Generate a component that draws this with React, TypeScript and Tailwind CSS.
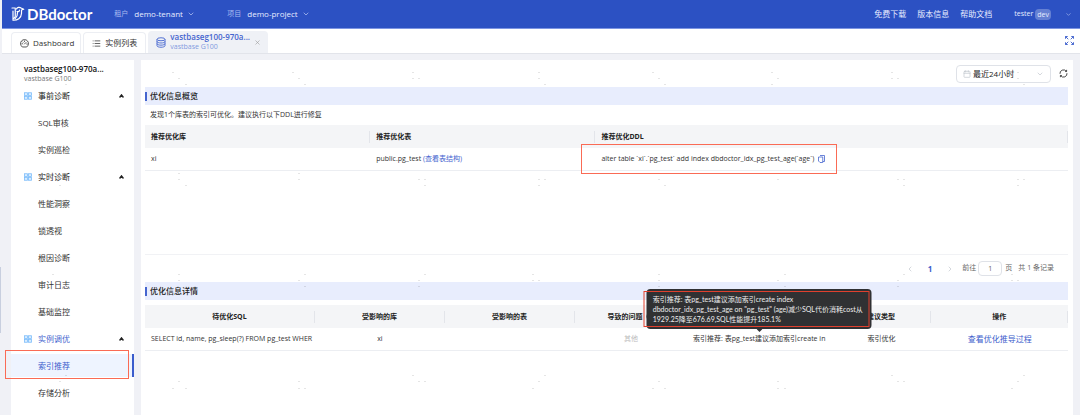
import React from "react";
import { Calendar, ChevronDown, ChevronLeft, ChevronRight, CircleHelp, List, X } from "lucide-react";

type MenuGroup = { title: string; active?: boolean; items: string[] };

const MENU: MenuGroup[] = [
  { title: "事前诊断", items: ["SQL审核", "实例巡检"] },
  { title: "实时诊断", items: ["性能洞察", "锁透视", "根因诊断", "审计日志", "基础监控"] },
  { title: "实例调优", active: true, items: ["索引推荐", "存储分析"] },
];

const CURRENT = "索引推荐";

// faint watermark specks, [x, y]
const SPECKS: [number, number][] = [
  [172, 72], [178, 78], [185, 84], [292, 72], [298, 78], [304, 84],
  [412, 72], [412, 78], [418, 78], [538, 72], [538, 78], [544, 84],
  [652, 72], [658, 78], [664, 84], [771, 72], [777, 78], [771, 84],
  [891, 72], [891, 78], [897, 78], [1017, 72], [1017, 78], [1023, 84], [65, 84],
  [178, 173], [178, 179], [185, 185], [298, 173], [298, 179], [59, 185],
  [418, 179], [424, 179], [424, 185], [538, 179], [544, 179], [538, 185],
  [658, 179], [664, 185], [777, 179], [897, 179], [903, 179], [903, 185],
  [1017, 179], [1023, 179], [1017, 185],
  [52, 274], [178, 274], [178, 280], [298, 280], [304, 274], [304, 286],
  [418, 280], [424, 274], [418, 286], [532, 274], [532, 280], [538, 280],
  [658, 274], [658, 280], [658, 286], [777, 280], [784, 274], [784, 286],
  [897, 280], [903, 274], [897, 286], [1011, 280], [1017, 280], [1011, 274],
  [65, 375], [59, 381], [178, 381], [172, 388], [185, 388], [298, 381], [298, 388], [304, 388],
  [412, 375], [418, 381], [424, 381], [544, 375], [538, 381], [532, 388],
  [658, 381], [652, 388], [664, 388], [777, 381], [777, 388], [784, 388],
  [891, 375], [897, 381], [903, 381], [1023, 375], [1017, 381], [1011, 388],
];

function Logo() {
  return (
    <svg className="shrink-0" width="14" height="16" viewBox="0 0 28 32" fill="none" stroke="#fff" strokeWidth="2.4" strokeLinecap="round" strokeLinejoin="round">
      <path d="M2 4h6.500v17L4 27V10" />
      <path d="M4 28.500c9 .5 16.500-4.500 17-13.500V8l4.500-1.500L20 4c-3-2.500-8-1.500-9 2" />
      <path d="M12 11c3 1 5 0 5-3M13 13c.5 5-1.500 9-5 12.500" />
    </svg>
  );
}

function GaugeIcon() {
  return (
    <svg width="9" height="9" viewBox="0 0 18 18" fill="none" stroke="#444" strokeWidth="1.8" strokeLinecap="round">
      <path d="M4 15.5a8 8 0 1 1 10 0z" strokeLinejoin="round" />
      <path d="m9 10 3-3M9 4v1M4 9.500h1M13.500 10h1M5.500 6l.6.6" />
    </svg>
  );
}

function DatabaseIcon() {
  return (
    <svg className="shrink-0" width="10" height="11" viewBox="0 0 20 22" fill="none" stroke="#4565cf" strokeWidth="1.8">
      <ellipse cx="10" cy="4.500" rx="8" ry="3" />
      <path d="M2 4.500v13c0 1.700 3.600 3 8 3s8-1.300 8-3v-13M2 9c0 1.700 3.600 3 8 3s8-1.300 8-3M2 13.300c0 1.700 3.600 3 8 3s8-1.300 8-3" />
    </svg>
  );
}

function GridIcon() {
  return (
    <svg width="8" height="8" viewBox="0 0 16 16" fill="#d9edff" stroke="#7cbcfa" strokeWidth="1.6">
      <rect x="1" y="1.500" width="6" height="5.500" />
      <rect x="9" y="1.500" width="6" height="5.500" />
      <rect x="1" y="9" width="6" height="5.500" />
      <rect x="9" y="9" width="6" height="5.500" />
    </svg>
  );
}

function ExpandIcon() {
  return (
    <svg width="9" height="9" viewBox="0 0 18 18" fill="none" stroke="#3a5ccc" strokeWidth="1.800">
      <path d="M1 5.500V1h4.500M1 1l5.500 5.500M12.500 1H17v4.500M17 1l-5.500 5.500M1 12.500V17h4.500M1 17l5.500-5.500M17 12.500V17h-4.500M17 17l-5.500-5.500" />
    </svg>
  );
}

function RefreshIcon() {
  return (
    <svg width="9" height="9" viewBox="0 0 16 16" fill="none" stroke="#333" strokeWidth="1.600">
      <path d="M1.800 8.500A6.200 6.200 0 0 1 13 4.200M14.200 7.500A6.200 6.200 0 0 1 3 11.800" />
      <path d="M13.500 1.500v3H11M2.500 14.500v-3H5" />
    </svg>
  );
}

function CopyIcon() {
  return (
    <svg width="7" height="8" viewBox="0 0 14 16" fill="none" stroke="#4565cf" strokeWidth="1.600">
      <path d="M4 1h9v12" />
      <path d="M1 4h8.500v11H4l-3-3z" />
      <path d="M9.500 13H13" />
    </svg>
  );
}

function HeaderSelect({ id, label, value }: { id: string; label: string; value: string }) {
  return (
    <div className="flex items-center">
      <label htmlFor={id} className="mr-1.5 text-[7px] text-[#a9baf0]">{label}</label>
      <select id={id} className="appearance-none bg-transparent text-[8px] text-[#e6ecff] outline-none">
        <option>{value}</option>
      </select>
      <ChevronDown size={8} className="ml-1 text-[#c3d0f7]" />
    </div>
  );
}

function Header() {
  return (
    <header className="flex h-[29px] items-center border-b border-[#7d95e2] bg-[#2c51c3] pr-2 pl-[9px] text-[8px] text-[#e6ecff]">
      <Logo />
      <span className="mr-[22px] ml-0.5 font-['Lato'] text-[15px] leading-4 font-bold text-white">DBdoctor</span>
      <div className="flex gap-8">
        <HeaderSelect id="tenant" label="租户" value="demo-tenant" />
        <HeaderSelect id="project" label="项目" value="demo-project" />
      </div>
      <nav className="ml-auto flex gap-[11px]">
        <a href="#download">免费下载</a>
        <a href="#version">版本信息</a>
        <a href="#docs">帮助文档</a>
      </nav>
      <button className="ml-[22px] flex items-center text-[7px]">
        tester
        <span className="ml-0.5 rounded-sm bg-[#6580d3] px-0.5 leading-[11px]">dev</span>
        <ChevronDown size={7} className="ml-3.5 text-[#b4c3f2]" />
      </button>
    </header>
  );
}

function Tabs() {
  return (
    <div className="flex h-[25px] items-end border-b border-[#e2e4ea] bg-white pr-1.5 pl-[9px] text-[8px] text-[#333]">
      <a href="#dashboard" className="flex h-[21px] items-center gap-1 rounded-t-sm border border-b-0 border-[#eceef3] pr-1.5 pl-2">
        <GaugeIcon />
        Dashboard
      </a>
      <a href="#instances" className="ml-0.5 flex h-[21px] items-center gap-1 rounded-t-sm border border-b-0 border-[#eceef3] px-2">
        <List size={9} />
        实例列表
      </a>
      <div className="ml-0.5 flex h-[22px] w-[120px] items-center rounded-t-sm bg-[#eff1f6] px-2">
        <DatabaseIcon />
        <a href="#instance" className="ml-1 flex w-20 flex-col leading-[10px] text-[#4565cf]">
          <span className="font-semibold whitespace-nowrap">vastbaseg100-970a...</span>
          <span className="text-[7px] text-[#8199e0]">vastbase G100</span>
        </a>
        <button aria-label="close" className="ml-1 text-[#999]">
          <X size={7} />
        </button>
      </div>
      <button aria-label="fullscreen" className="mb-2 ml-auto">
        <ExpandIcon />
      </button>
    </div>
  );
}

function Sidebar() {
  return (
    <aside className="w-[123px] shrink-0 bg-white pt-1 text-[8px] text-[#333]">
      <div className="h-[18px] pl-[13px] leading-[10px]">
        <p className="font-semibold text-[#111]">vastbaseg100-970a...</p>
        <p className="text-[7px] text-[#777]">vastbase G100</p>
      </div>
      {MENU.map((group) => (
        <div key={group.title}>
          <button className={`flex h-[27px] w-full items-center pr-2.5 pl-[13px] ${group.active ? "text-[#4565cf]" : "text-[#222]"}`}>
            <GridIcon />
            <span className="ml-1.5">{group.title}</span>
            <svg className="ml-auto" width="5" height="4" viewBox="0 0 10 8" fill="none" stroke="#222" strokeWidth="3">
              <path d="M1 7 5 2l4 5" />
            </svg>
          </button>
          {group.items.map((item) => (
            <div key={item} className="relative py-0.5">
              {item === CURRENT ? (
                <>
                  <a href="#index" className="flex h-[23px] items-center border-r-2 border-[#3a5ccc] bg-[#eef4ff] pl-[27px] text-[#3a5ccc]">
                    {item}
                  </a>
                  <span className="absolute -top-0.5 right-[5px] -left-1.5 h-[29px] border border-[#fa6b55]" />
                </>
              ) : (
                <a href="#menu" className="flex h-[23px] items-center pl-[27px]">{item}</a>
              )}
            </div>
          ))}
        </div>
      ))}
    </aside>
  );
}

function SectionTitle({ children }: { children: React.ReactNode }) {
  return (
    <h2 className="flex h-[18px] items-center bg-[#e8edfd] text-[8px] font-medium text-[#222]">
      <span className="mr-[3px] h-[9px] w-0.5 bg-[#4565cf]" />
      {children}
    </h2>
  );
}

function Th({ children, className = "text-center" }: { children?: React.ReactNode; className?: string }) {
  return (
    <th className="h-[23px] p-0">
      <div className={`h-3 border-r border-[#e3e5ea] px-1.5 leading-3 font-bold whitespace-nowrap ${className}`}>{children}</div>
    </th>
  );
}

function OverviewTable() {
  return (
    <table className="w-full table-fixed border-collapse text-left text-[7px] text-[#333]">
      <colgroup>
        <col className="w-[24.4%]" />
        <col className="w-[24.4%]" />
        <col />
      </colgroup>
      <thead className="bg-[#f4f5f7] text-[#222]">
        <tr>
          <Th className="text-left">推荐优化库</Th>
          <Th className="text-left">推荐优化表</Th>
          <Th className="text-left">推荐优化DDL</Th>
        </tr>
      </thead>
      <tbody>
        <tr className="h-[22px] border-b border-[#eceef2]">
          <td className="px-1.5">xi</td>
          <td className="px-1.5">
            public.pg_test <a href="#schema" className="text-[#4565cf]">(查看表结构)</a>
          </td>
          <td className="relative px-1.5">
            <div className="flex items-center gap-1 whitespace-nowrap">
              alter table `xi`.`pg_test` add index dbdoctor_idx_pg_test_age(`age`)
              <button aria-label="copy"><CopyIcon /></button>
            </div>
            <span className="absolute -top-1 -left-3.5 h-[30px] w-64 border border-[#fa6b55]" />
          </td>
        </tr>
      </tbody>
    </table>
  );
}

function Pagination() {
  return (
    <div className="flex h-7 items-center justify-end border-t border-[#f1f2f5] pr-3.5 text-[7px] text-[#666]">
      <button aria-label="previous" className="text-[#c0c4cc]"><ChevronLeft size={8} /></button>
      <button className="mx-3.5 text-[8px] font-bold text-[#3a5ccc]">1</button>
      <button aria-label="next" className="mr-2 text-[#c0c4cc]"><ChevronRight size={8} /></button>
      <label htmlFor="page">前往</label>
      <input id="page" defaultValue="1" className="mr-[3px] ml-0.5 h-[15px] w-6 rounded-sm border border-[#dfe2e8] text-center outline-none" />
      <span className="mr-1.5">页</span>
      <span>共 1 条记录</span>
    </div>
  );
}

function Tooltip() {
  return (
    <div role="tooltip" className="absolute bottom-full left-1/2 mb-[5px] w-[225px] -translate-x-1/2 rounded-sm bg-[#303133] px-1.5 py-[5px] text-left font-['Lato','Noto_Sans_CJK_SC',sans-serif] text-[7px] leading-[10px] whitespace-nowrap text-[#eee]">
      索引推荐: 表pg_test建议添加索引create index
      <br />
      dbdoctor_idx_pg_test_age on "pg_test" (age)减少SQL代价消耗cost从
      <br />
      1929.25降至676.69,SQL性能提升185.1%
      <span className="absolute top-0.5 right-0.5 bottom-0.5 -left-[3px] border border-[#e0402e]" />
      <svg className="absolute top-full left-1/2 -translate-x-1/2" width="6" height="3" viewBox="0 0 6 3" fill="#303133">
        <path d="M0 0h6L3 3z" />
      </svg>
    </div>
  );
}

function DetailTable() {
  return (
    <table className="mt-[5px] w-full table-fixed border-collapse text-center text-[7px] text-[#333]">
      <colgroup>
        <col className="w-[18.4%]" />
        <col className="w-[14.1%]" />
        <col className="w-[14.1%]" />
        <col className="w-[12.1%]" />
        <col className="w-[15.7%]" />
        <col className="w-[10.8%]" />
        <col />
      </colgroup>
      <thead className="bg-[#f4f5f7] text-[#222]">
        <tr>
          <Th>待优化SQL</Th>
          <Th>受影响的库</Th>
          <Th>受影响的表</Th>
          <Th className="flex items-center justify-center gap-1">
            导致的问题
            <CircleHelp size={7} />
          </Th>
          <Th />
          <Th>建议类型</Th>
          <Th>操作</Th>
        </tr>
      </thead>
      <tbody>
        <tr className="h-[22px] border-b border-[#eceef2]">
          <td className="overflow-hidden px-1.5 text-left whitespace-nowrap">SELECT id, name, pg_sleep(?) FROM pg_test WHER</td>
          <td>xi</td>
          <td />
          <td className="text-[#bbb]">其他</td>
          <td className="whitespace-nowrap">
            <div className="relative">
              索引推荐: 表pg_test建议添加索引create in
              <Tooltip />
            </div>
          </td>
          <td>索引优化</td>
          <td>
            <a href="#detail" className="text-[8px] text-[#3a5ccc]">查看优化推导过程</a>
          </td>
        </tr>
      </tbody>
    </table>
  );
}

export default function App() {
  return (
    <div className="relative flex min-h-screen bg-[#f0f1f6] pl-0.5 font-['Open_Sans','Noto_Sans_CJK_SC',sans-serif]">
      <span className="absolute top-[267px] left-0 h-[66px] w-px bg-[#c8cfdf]" />
      <div className="flex min-w-0 flex-1 flex-col">
        <Header />
        <Tabs />
        <div className="flex flex-1 gap-[7px] pt-1.5 pr-[7px] pl-[9px]">
          <Sidebar />
          <main className="min-w-0 flex-1 bg-white pr-[5px] pl-1">
            <div className="flex h-[27px] items-center justify-end">
              <div className="flex h-[18px] w-[95px] items-center rounded-sm border border-[#dfe2e8] px-1.5">
                <Calendar size={8} className="mr-0.5 text-[#c0c4cc]" />
                <select aria-label="time range" className="flex-1 appearance-none bg-transparent text-[8px] text-[#222] outline-none">
                  <option>最近24小时</option>
                </select>
                <ChevronDown size={8} className="text-[#c0c4cc]" />
              </div>
              <button aria-label="refresh" className="ml-2"><RefreshIcon /></button>
            </div>
            <SectionTitle>优化信息概览</SectionTitle>
            <p className="pl-[5px] text-[7px] leading-5 text-[#333]">发现1个库表的索引可优化。建议执行以下DDL进行修复</p>
            <div className="min-h-[129px]">
              <OverviewTable />
            </div>
            <Pagination />
            <SectionTitle>优化信息详情</SectionTitle>
            <DetailTable />
          </main>
        </div>
      </div>
      <svg className="pointer-events-none absolute inset-0 h-full w-full" fill="#000" fillOpacity="0.1">
        {SPECKS.map(([x, y]) => (
          <rect key={`${x}-${y}`} x={x} y={y} width="2" height="1" />
        ))}
      </svg>
    </div>
  );
}
